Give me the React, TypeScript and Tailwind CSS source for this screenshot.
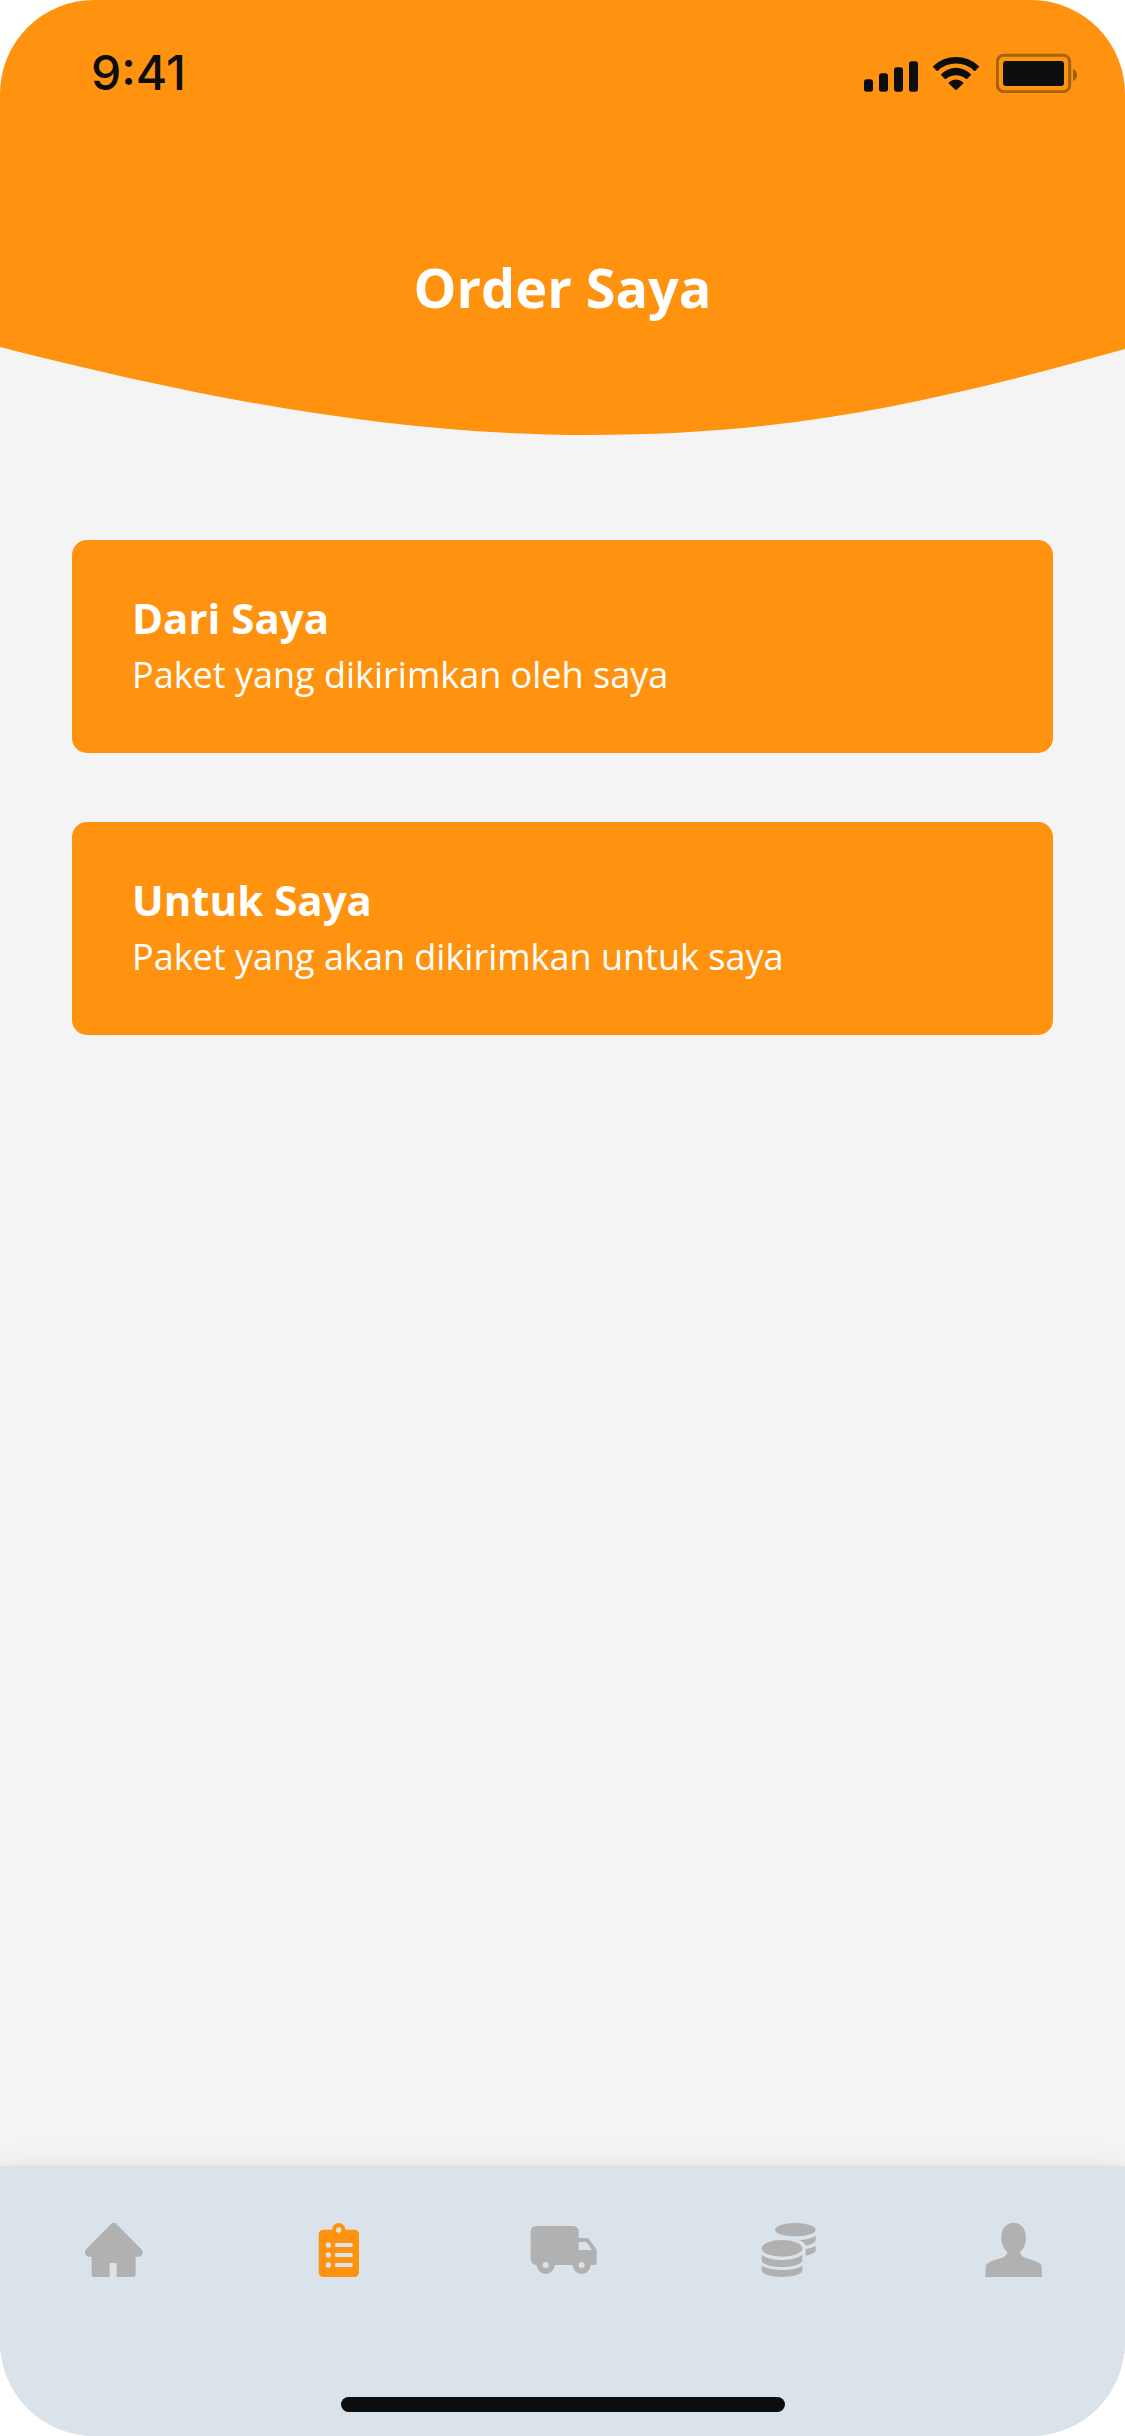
import React from "react";

function StatusBar() {
  return (
    <div className="flex items-center justify-between pt-11 pr-12 pl-[91px] text-[#0c0d0f]">
      <time className="font-['Inter',sans-serif] text-[48px] leading-[58px] font-medium">9:41</time>
      <div className="flex items-center gap-[15px]">
        <svg aria-label="Sinyal" className="h-10 w-[54px]" viewBox="72 69 162 120" fill="currentColor">
          <rect x="72" y="148" width="27" height="37" rx="8" />
          <rect x="117" y="130" width="27" height="55" rx="8" />
          <rect x="162" y="112" width="27" height="73" rx="8" />
          <rect x="207" y="94" width="27" height="91" rx="8" />
        </svg>
        <svg aria-label="Wi-Fi" className="h-10 w-12" viewBox="279 69 144 120" fill="currentColor">
          <path d="M280 108A99 99 0 0 1 416 108Q418 110 416 112L406 122Q404 124 402 122A78 78 0 0 0 294 122Q292 124 290 122L280 112Q278 110 280 108Z" />
          <path d="M304 132A61 61 0 0 1 392 132Q394 134 392 136L382 146Q380 148 378 146A48 48 0 0 0 318 146Q316 148 314 146L304 136Q302 134 304 132Z" />
          <path d="M327 157A31 31 0 0 1 369 157Q371 159 369 161L350 179Q348 181 346 179L327 161Q325 159 327 157Z" />
        </svg>
        <svg aria-label="Baterai" className="h-10 w-[81px]" viewBox="468 69 243 120" fill="currentColor">
          <rect x="472" y="76" width="217" height="109" rx="19" fill="none" stroke="currentColor" strokeWidth="9" opacity="0.37" />
          <rect x="489" y="93" width="183" height="75" rx="9" />
          <path d="M699 117C707 120 711 127 711 135S707 150 699 153Z" opacity="0.4" />
        </svg>
      </div>
    </div>
  );
}

function Header() {
  return (
    <header>
      <div className="bg-[#ff930f] pb-[23px]">
        <StatusBar />
        <h1 className="mt-[148px] text-center text-[54px] leading-[74px] font-bold text-white">Order Saya</h1>
      </div>
      <svg className="block h-[88px] w-full" viewBox="0 0 1125 88" preserveAspectRatio="none" aria-hidden="true">
        <path d="M0 0C200 51 392 88 588 88S925 58 1125 2V0Z" fill="#ff930f" />
      </svg>
    </header>
  );
}

function OrderCard({ title, text }: { title: string; text: string }) {
  return (
    <button type="button" className="block w-full rounded-[15px] bg-[#ff930f] px-[60px] pt-[50px] pb-[53px] text-left text-white">
      <span className="block text-[42px] leading-[56px] font-bold">{title}</span>
      <span className="mt-1 block text-[36px] leading-[50px] font-normal">{text}</span>
    </button>
  );
}

const iconClass = "size-[72px]";

const HomeIcon = () => (
  <svg className={iconClass} viewBox="52 192 216 216" fill="currentColor">
    <path d="M162 218Q166 218 170 222L245 298Q250 303 249 308Q247 320 235 320H228V374Q228 381 221 381H171V339H150V381H103Q96 381 96 374V320H89Q78 320 76 308Q75 303 80 297L154 222Q158 218 162 218Z" />
  </svg>
);

const ClipboardIcon = () => (
  <svg className={iconClass} viewBox="727 192 216 216" fill="currentColor">
    <rect x="777" y="239" width="121" height="142" rx="14" />
    <circle cx="837" cy="239" r="20" />
    <g fill="#dae2ea">
      <circle cx="837" cy="240" r="8" />
      <circle cx="806" cy="285" r="8" />
      <circle cx="806" cy="315" r="8" />
      <circle cx="806" cy="345" r="8" />
      <rect x="826" y="279" width="53" height="12" rx="4" />
      <rect x="826" y="309" width="53" height="12" rx="4" />
      <rect x="826" y="339" width="53" height="12" rx="4" />
    </g>
  </svg>
);

const TruckIcon = () => (
  <svg className={iconClass} viewBox="82 42 216 216" fill="currentColor" fillRule="evenodd">
    <path d="M111 78H219Q237 78 237 96V114H259Q264 114 268 118L288 145Q291 149 291 154V186Q291 195 282 195H273A27 27 0 0 1 219 195H165A27 27 0 0 1 111 195Q93 194 93 176V96Q93 78 111 78ZM237 126V150H277L263 129Q261 126 258 126ZM138 186A9 9 0 1 0 138 204A9 9 0 1 0 138 186ZM246 186A9 9 0 1 0 246 204A9 9 0 1 0 246 186Z" />
  </svg>
);

const CoinsIcon = () => (
  <svg className={iconClass} viewBox="757 42 216 216" fill="currentColor">
    <ellipse cx="887" cy="89" rx="61" ry="20" />
    <ellipse cx="847" cy="145" rx="61" ry="25" />
    <path d="M786 164C800 175 824 180 847 180S894 175 908 164V180C908 193 880 201 847 201S786 193 786 180Z" />
    <path d="M786 197C800 206 824 210 847 210S894 206 908 197V211C908 223 880 231 847 231S786 223 786 211Z" />
    <path d="M899 121C917 119 935 115 948 107V120C948 127 937 133 919 137C915 130 909 124 899 121Z" />
    <path d="M918 147C930 145 940 142 948 137V151C948 158 935 164 918 167Z" />
  </svg>
);

const UserIcon = () => (
  <svg className={iconClass} viewBox="112 192 216 216" fill="currentColor">
    <path d="M222 218C245 218 259 237 259 264C259 281 252 296 243 304C240 307 241 309 243 312C246 318 250 321 256 323C268 327 285 331 295 337C304 342 306 346 306 354L307 381H137L138 354C138 346 140 342 149 337C159 331 176 327 188 323C194 321 198 318 201 312C203 309 204 307 201 304C192 296 185 281 185 264C185 237 199 218 222 218Z" />
  </svg>
);

const tabs = [
  { label: "Beranda", Icon: HomeIcon, active: false },
  { label: "Order Saya", Icon: ClipboardIcon, active: true },
  { label: "Pengiriman", Icon: TruckIcon, active: false },
  { label: "Saldo", Icon: CoinsIcon, active: false },
  { label: "Profil", Icon: UserIcon, active: false },
];

function TabBar() {
  return (
    <footer className="bg-[#dae2ea] shadow-[0_0_30px_rgba(0,0,0,0.07),0_0_6px_rgba(0,0,0,0.04)]">
      <nav className="grid h-[168px] grid-cols-5 pt-12">
        {tabs.map(({ label, Icon, active }) => (
          <a
            key={label}
            href="#"
            aria-label={label}
            aria-current={active ? "page" : undefined}
            className={active ? "flex justify-center text-[#ff930f]" : "flex justify-center text-[#b1b1b1]"}
          >
            <Icon />
          </a>
        ))}
      </nav>
      <div className="flex h-[102px] items-end justify-center pb-6">
        <div className="h-[15px] w-[444px] rounded-full bg-[#0c0d0f]" />
      </div>
    </footer>
  );
}

export default function App() {
  return (
    <div className="bg-white">
      <div className="flex min-h-screen flex-col overflow-hidden rounded-[94px] bg-[#f4f4f4] font-['Open_Sans',sans-serif]">
        <Header />
        <main className="flex grow flex-col gap-[69px] px-[72px] pt-[105px]">
          <OrderCard title="Dari Saya" text="Paket yang dikirimkan oleh saya" />
          <OrderCard title="Untuk Saya" text="Paket yang akan dikirimkan untuk saya" />
        </main>
        <TabBar />
      </div>
    </div>
  );
}
